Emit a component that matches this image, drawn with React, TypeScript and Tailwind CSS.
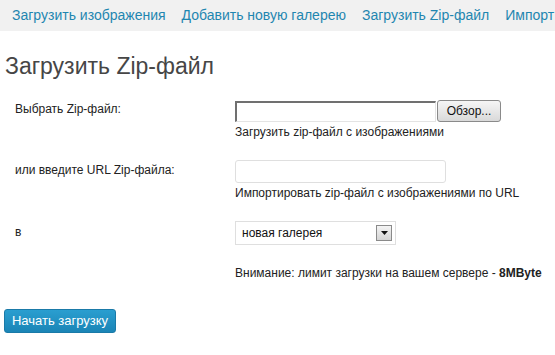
import React from "react";

export default function App() {
  return (
    <div className="w-[555px] h-[355px] bg-white overflow-hidden text-[12px] text-[#222]" style={{ fontFamily: '"Liberation Sans", Arial, sans-serif' }}>
      <div className="h-[31px] bg-[#f1f1f1] flex items-center pl-[12px] gap-[16px] text-[14px] text-[#1f86b0] whitespace-nowrap overflow-hidden">
        <span>Загрузить изображения</span>
        <span>Добавить новую галерею</span>
        <span>Загрузить Zip-файл</span>
        <span>Импорт</span>
      </div>
      <h1 className="text-[23px] leading-[28px] text-[#464646] pl-[5px] mt-[21px]">Загрузить Zip-файл</h1>

      <div className="grid grid-cols-[220px_1fr] pl-[15px] mt-[20px] whitespace-nowrap">
        <div className="pt-[2px] leading-[15px]">Выбрать Zip-файл:</div>
        <div>
          <div className="flex items-center h-[22px]">
            <div className="w-[201px] h-[21px] border-t-[2px] border-l-[2px] border-[#707070] border-r border-b border-r-[#e4e4e4] border-b-[#e4e4e4] bg-white" />
            <div className="ml-[1px] w-[64px] h-[22px] rounded-[3px] border border-[#8a8a8a] bg-gradient-to-b from-[#f6f6f6] to-[#d9d9d9] flex items-center justify-center text-[12px] text-[#111]">Обзор...</div>
          </div>
          <div className="mt-[3px] leading-[15px]">Загрузить zip-файл с изображениями</div>
        </div>

        <div className="pt-[3px] leading-[15px] mt-[20px]">или введите URL Zip-файла:</div>
        <div className="mt-[20px]">
          <div className="w-[211px] h-[23px] border border-[#dfdfdf] rounded-[3px] bg-white" />
          <div className="mt-[3px] leading-[15px]">Импортировать zip-файл с изображениями по URL</div>
        </div>

        <div className="pt-[4px] mt-[20px] leading-[15px]">в</div>
        <div className="mt-[20px]">
          <div className="w-[161px] h-[24px] border border-[#dfdfdf] bg-white flex items-center justify-between pl-[6px] pr-[3px]">
            <span className="text-[12px] text-[#111]">новая галерея</span>
            <div className="w-[16px] h-[16px] border border-[#8a8a8a] bg-gradient-to-b from-[#f4f4f4] to-[#d4d4d4] flex items-center justify-center">
              <svg width="7" height="4" viewBox="0 0 7 4"><path d="M0 0h7L3.5 4z" fill="#111" /></svg>
            </div>
          </div>
          <div className="mt-[21px] leading-[15px]">Внимание: лимит загрузки на вашем сервере - <b>8MByte</b></div>
        </div>
      </div>

      <div className="pl-[4px] mt-[28px]">
        <div className="w-[112px] h-[24px] rounded-[3px] bg-gradient-to-b from-[#2a9ed0] to-[#1b85b6] border border-[#1a7aa8] text-white text-[13px] flex items-center justify-center">Начать загрузку</div>
      </div>
    </div>
  );
}
